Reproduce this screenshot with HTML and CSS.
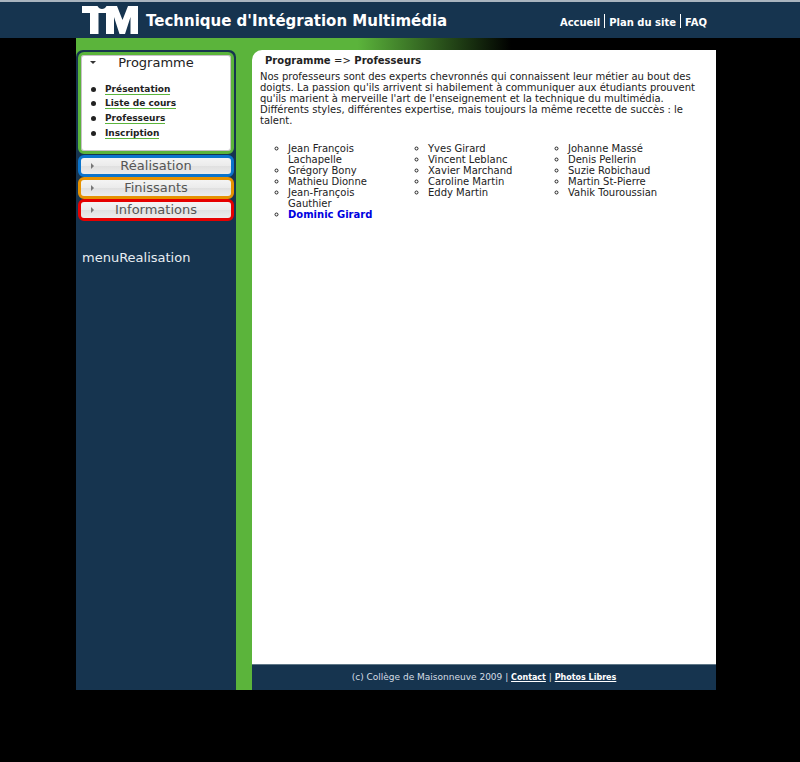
FILE: index.html
```html
<!DOCTYPE html>
<html lang="fr">
<head>
<meta charset="utf-8">
<title>Technique d'Intégration Multimédia</title>
<link rel="stylesheet" href="styles.css">
</head>
<body>
<header class="site-header">
  <div class="wrap header-row">
    <svg class="logo" viewBox="0 0 56 28" role="img" aria-label="TIM">
      <path fill="#fff" d="M0 0H15.500Q17 3 20 3T24.500 0H35L40.500 14L46 0H56V28H48.500V11L43 28H37.500L32 11V28H24V7H16.500V28H8V7H0Z"/>
    </svg>
    <h1 class="site-title">Technique d'Intégration Multimédia</h1>
    <nav class="top-nav">
      <a href="#">Accueil</a>
      <a href="#">Plan du site</a>
      <a href="#">FAQ</a>
    </nav>
  </div>
</header>
<div class="wrap">
  <div class="ribbon"></div>
  <div class="layout">
    <aside class="sidebar">
      <div class="menu-frame">
        <section class="panel panel-open green">
          <button class="tab" type="button" aria-expanded="true"><svg class="arrow" viewBox="0 0 6 6"><path d="M0 1H6L3 4Z"/></svg><span>Programme</span></button>
          <ul class="menu">
            <li><a href="#">Présentation</a></li>
            <li><a href="#">Liste de cours</a></li>
            <li><a href="#">Professeurs</a></li>
            <li><a href="#">Inscription</a></li>
          </ul>
        </section>
      </div>
      <section class="panel blue"><button class="tab" type="button" aria-expanded="false"><svg class="arrow" viewBox="0 0 6 6"><path d="M1 0L4 3L1 6Z"/></svg><span>Réalisation</span></button></section>
      <section class="panel orange"><button class="tab" type="button" aria-expanded="false"><svg class="arrow" viewBox="0 0 6 6"><path d="M1 0L4 3L1 6Z"/></svg><span>Finissants</span></button></section>
      <section class="panel red"><button class="tab" type="button" aria-expanded="false"><svg class="arrow" viewBox="0 0 6 6"><path d="M1 0L4 3L1 6Z"/></svg><span>Informations</span></button></section>
      <p class="menu-name">menuRealisation</p>
    </aside>
    <div class="page">
      <main class="content">
        <h2 class="crumbs">Programme <span>=&gt;</span> Professeurs</h2>
        <p class="intro">Nos professeurs sont des experts chevronnés qui connaissent leur métier au bout des doigts. La passion qu'ils arrivent si habilement à communiquer aux étudiants prouvent qu'ils marient à merveille l'art de l'enseignement et la technique du multimédia. Différents styles, différentes expertise, mais toujours la même recette de succès : le talent.</p>
        <div class="people">
          <ul>
            <li>Jean François Lachapelle</li>
            <li>Grégory Bony</li>
            <li>Mathieu Dionne</li>
            <li>Jean-François Gauthier</li>
            <li><a href="#">Dominic Girard</a></li>
          </ul>
          <ul>
            <li>Yves Girard</li>
            <li>Vincent Leblanc</li>
            <li>Xavier Marchand</li>
            <li>Caroline Martin</li>
            <li>Eddy Martin</li>
          </ul>
          <ul>
            <li>Johanne Massé</li>
            <li>Denis Pellerin</li>
            <li>Suzie Robichaud</li>
            <li>Martin St-Pierre</li>
            <li>Vahik Touroussian</li>
          </ul>
        </div>
      </main>
      <footer class="footer">(c) Collège de Maisonneuve 2009 | <a href="#">Contact</a> | <a href="#">Photos Libres</a></footer>
    </div>
  </div>
</div>
</body>
</html>
```
FILE: styles.css
```css
* { box-sizing: border-box; }
body {
  margin: 0;
  background: #000;
  color: #222;
  font: 10px/11px "DejaVu Sans", Verdana, sans-serif;
}
h1, h2, p, ul { margin: 0; padding: 0; }
.wrap {
  max-width: 648px;
  margin: 0 auto;
  padding-right: 8px;
}
.site-header {
  height: 38px;
  background: #16344f;
  border-top: 2px solid #a9b4be;
}
.header-row {
  display: flex;
  align-items: flex-start;
  padding: 4px 16px 0 6px;
}
.logo { width: 56px; height: 28px; flex: none; }
.site-title {
  margin-left: 8px;
  color: #fff;
  font-size: 15px;
  line-height: 30px;
  white-space: nowrap;
}
.top-nav {
  display: flex;
  margin-left: auto;
  padding-top: 8px;
}
.top-nav a {
  padding: 3px 4px 0;
  color: #fff;
  font-size: 10px;
  line-height: 11px;
  font-weight: bold;
  text-decoration: none;
  white-space: nowrap;
}
.top-nav a + a { border-left: 1px solid #fff; }
.top-nav a:last-child { padding-right: 1px; }
.ribbon {
  height: 12px;
  background: linear-gradient(to right, #5bb43b 44%, #000 68%);
}
.layout {
  display: grid;
  grid-template-columns: 160px minmax(0, 1fr);
  column-gap: 16px;
  min-height: 640px;
  background: #5bb43b;
}
.sidebar {
  background: linear-gradient(#5bb43b 8px, #16344f 8px);
}
.menu-frame {
  padding: 2px 2px 1px;
  background: #16344f;
  border-radius: 7px 7px 0 0;
}
.panel {
  margin: 0 2px;
  border: 3px solid;
  border-radius: 6px;
  background: linear-gradient(#f4f4f4, #ebebeb 50%, #e0e0e0 51%, #ececec);
}
.panel-open {
  height: 102px;
  margin: 0;
  background: #fff;
  box-shadow: inset 0 0 0 1px #c8c0c8;
}
.green { border-color: #5bb43b; }
.blue { border-color: #0b74cc; }
.orange { border-color: #e69100; }
.red { border-color: #e60000; }
.tab {
  display: grid;
  grid-template-columns: 26px 1fr 26px;
  align-items: center;
  width: 100%;
  height: 16px;
  padding: 0;
  border: 0;
  background: none;
  color: #555;
  font: 13px/16px "DejaVu Sans", Verdana, sans-serif;
  text-align: center;
}
.panel-open .tab { color: #222; }
.arrow { width: 6px; height: 6px; margin-left: 9px; fill: #777; }
.panel-open .arrow { fill: #333; }
.menu {
  margin-top: 11px;
  padding-left: 24px;
  font-size: 9px;
  line-height: 14px;
  font-weight: bold;
  list-style: none;
}
.menu li { display: flex; align-items: center; height: 14px; }
.menu li + li { height: 15px; }
.menu li::before {
  content: "";
  width: 5px;
  height: 5px;
  margin: 0 9px 0 -14px;
  border-radius: 50%;
  background: #222;
}
.menu a {
  color: #222;
  line-height: 10px;
  text-decoration: none;
  border-bottom: 1px solid #5bb43b;
}
.menu-name {
  padding: 29px 6px 0;
  color: #e8edf2;
  font-size: 13px;
  line-height: 16px;
}
.page { display: flex; flex-direction: column; }
.content {
  flex: 1;
  padding: 5px 8px;
  background: #fff;
  border-top-left-radius: 10px;
}
.crumbs {
  padding-left: 5px;
  font-size: 10px;
  line-height: 12px;
}
.crumbs span { font-weight: normal; }
.intro { margin-top: 4px; }
.people {
  display: grid;
  grid-template-columns: repeat(3, 100px);
  column-gap: 40px;
  margin: 17px 0 0 28px;
}
.people ul { list-style: circle; }
.people a { color: #0000e0; font-weight: bold; text-decoration: none; white-space: nowrap; }
.footer {
  height: 26px;
  border-top: 1px solid #5f7787;
  background: #16344f;
  color: #d5dde4;
  font-size: 9px;
  line-height: 25px;
  text-align: center;
}
.footer a { color: #fff; font-size: 8px; font-weight: bold; }
```
